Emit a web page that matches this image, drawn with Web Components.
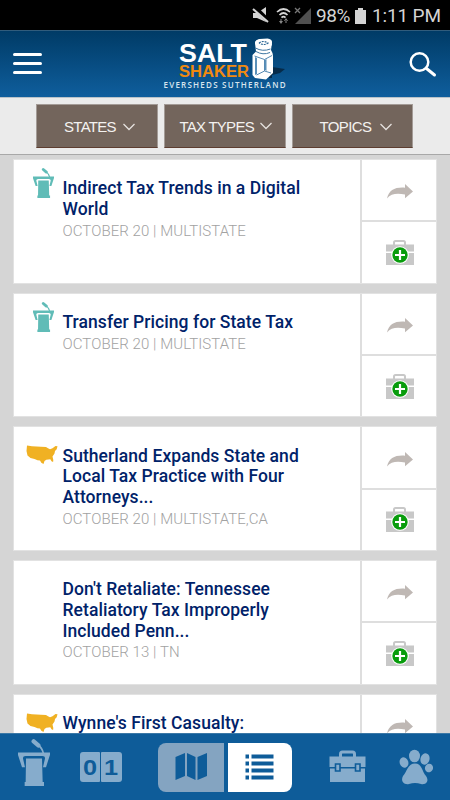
<!DOCTYPE html>
<html lang="en">
<head>
<meta charset="utf-8">
<title>SALT Shaker</title>
<style>
    html, body {
        margin: 0;
        height: 100%;
        overflow: hidden;
        background: #d5d5d5;
        font-family: Roboto, "Liberation Sans", sans-serif;
    }
</style>
</head>
<body>
<salt-app></salt-app>

<script>
const icons = {
    podium: `<svg width="21" height="30" viewBox="0 0 96 140" preserveAspectRatio="none">
        <path fill="none" stroke="currentColor" stroke-width="13" stroke-linecap="round" d="M47 7l14 12"/>
        <path fill="none" stroke="currentColor" stroke-width="5" d="M60 18q12 8 16 24"/>
        <path fill="currentColor" d="M0 40h96v7L84 84h-9l6-26q0-7-8-7H23q-8 0-8 7l6 26h-9L0 48z"/>
        <path fill="currentColor" d="M24 58h48l2 70h4v12H20v-12h3z"/></svg>`,
    usa: `<svg width="32" height="20" viewBox="0 0 32 20">
        <path fill="currentColor" d="M1 .5l5 .8 9 .5 5 .2 2 1.200 2 1 2.500-1 3-2.200 2 .3-.8 3-1.700 1.700-.5 2.500-2 3 .8 3.500-.2 2-1.600-.7-1.200-2-4 .5-1.800 1.200-1 3-2.200-1.200-1.300-2.300-2.500-.3L8.500 14l-4-1-3-2.500L.5 6z"/></svg>`,
    share: `<svg width="26" height="15" viewBox="0 0 26 15">
        <path fill="#bfb8b4" d="M0 14.500C2 6 8 3 18 3.700V0l8 7.500-8 6.700v-3.700C10 9 4 9.500 0 14.500z"/></svg>`,
    addCase: `<svg width="30" height="27" viewBox="0 0 30 27">
        <path fill="none" stroke="#c8c8c8" stroke-width="2" d="M9 6V3.500q0-1.500 1.500-1.500h8q1.500 0 1.500 1.500V6"/>
        <path fill="#c8c8c8" d="M1 5.500h28v7H1zM1 14h28v12H1z"/>
        <circle cx="15" cy="16" r="8.800" fill="#fff"/><circle cx="15" cy="16" r="7.700" fill="#089c0c"/>
        <path stroke="#fff" stroke-width="2.200" d="M10 16h10M15 11v10"/></svg>`
};

class StatusBar extends HTMLElement {
    constructor() {
        super();
        this.attachShadow({mode: 'open'}).innerHTML = `
        <style>
            :host {
                display: flex;
                align-items: center;
                height: 30px;
                box-sizing: border-box;
                padding: 1px 0 0 252px;
                background: #000;
                color: #d4d4d4;
                font-size: 19px;
            }
            svg { flex: none; }
            .percent { margin-left: 0; width: 36px; letter-spacing: -.4px; }
            .battery { margin: 0 0 0 3px; }
            .time { margin-left: 6px; white-space: nowrap; letter-spacing: -.15px; }
        </style>
        <svg width="64" height="22" viewBox="0 0 64 22">
            <path fill="#d4d4d4" d="M1 8h4l9-6v15L5 13H1z"/>
            <path stroke="#000" stroke-width="4.500" d="M2 1.500l14 14"/>
            <path stroke="#d4d4d4" stroke-width="2" d="M1 4l15 13"/>
            <g fill="none" stroke="#d4d4d4" stroke-width="1.700"><path d="M25 7q6.500-6 13 0M27.500 10q4-4 8 0M29.500 12.700q2-2 4 0"/></g>
            <path fill="#888" d="M27 16h4l-2 3zM32 16h4l-2-3zM28.500 14h1v3h-1zM33.500 15h1v3h-1z"/>
            <path fill="#505050" d="M59 3v16H43z"/>
            <path stroke="#777" stroke-width="1.300" d="M43 3l5 5m0-5l-5 5"/>
        </svg>
        <span class="percent">98%</span>
        <svg class="battery" width="11" height="16" viewBox="0 0 11 16"><path fill="#d4d4d4" d="M3 0h5v2h3v14H0V2h3z"/></svg>
        <span class="time">1:11 PM</span>`;
    }
}
customElements.define('status-bar', StatusBar);

class AppHeader extends HTMLElement {
    constructor() {
        super();
        this.attachShadow({mode: 'open'}).innerHTML = `
        <style>
            :host {
                display: flex;
                justify-content: space-between;
                height: 67px;
                box-sizing: border-box;
                padding: 0 13px 0 13px;
                border-top: 1px solid #315c7c;
                background: linear-gradient(#003b66, #0f5e9d);
            }
            .menu { padding-top: 20.500px; }
            .search { padding-top: 19.500px; }
            .logo { width: 130px; margin-left: -2px; }
            svg { display: block; }
            text { font-family: "Liberation Sans", sans-serif; font-weight: bold; }
            .firm { font-family: "Open Sans", sans-serif; font-weight: 600; }
        </style>
        <svg class="menu" width="30" height="25" viewBox="0 0 30 25"><path stroke="#fff" stroke-width="3" stroke-linecap="round" d="M1.500 3h26M1.500 12h26M1.500 21h26"/></svg>
        <svg class="logo" width="130" height="64" viewBox="0 0 130 64">
            <text x="19" y="30.500" font-size="26.500" fill="#fff" textLength="68" lengthAdjust="spacingAndGlyphs">SALT</text>
            <text x="19" y="46" font-size="16" fill="#f08a10" textLength="70" lengthAdjust="spacingAndGlyphs">SHAKER</text>
            <text class="firm" x="3.500" y="57" font-size="8" fill="#d7e4ee" textLength="122">EVERSHEDS SUTHERLAND</text>
            <path fill="#062b49" d="M112 36l13 2-5 4-8 2v3h-3z"/>
            <path fill="#fff" d="M95 12q0-3 4.500-4l8-.5q5 1 4.500 4L111 19l1.500 3 .5 3v17l-7 6.500-11-1.500-2.500-3V24l3.500-3.500z"/>
            <ellipse cx="103.500" cy="12.500" rx="8.500" ry="4.300" fill="#fff" transform="rotate(6 103.500 12.500)"/>
            <path fill="none" stroke="#2b6795" stroke-width="1.200" stroke-dasharray="2 1" d="M99 12q4-3 9 0-4 3-9 0"/>
            <path fill="none" stroke="#3d76a2" stroke-width="1" d="M95.500 17q7 4 15 1M96 20.500q7 4 14 1"/>
            <path fill="none" stroke="#5489b3" stroke-width="1" d="M94.500 25l10 3.500 7.500-4M104.500 28.500V40l-8 4M104.500 40l6.500 2"/>
            <path fill="#5a90b9" d="M95 26l2 1v16l-2 1zM105 29l1.500-1v12l-1.500-1z"/>
        </svg>
        <svg class="search" width="28" height="27" viewBox="0 0 28 27"><circle cx="10.500" cy="11.500" r="8.800" fill="none" stroke="#fff" stroke-width="2.500"/><path stroke="#fff" stroke-width="3" stroke-linecap="round" d="M17.500 18l8 6.500"/></svg>`;
    }
}
customElements.define('app-header', AppHeader);

class FilterButton extends HTMLElement {
    constructor() {
        super();
        this.attachShadow({mode: 'open'}).innerHTML = `
        <style>
            :host {
                display: flex;
                width: 121.800px;
                align-items: center;
                justify-content: center;
                gap: 7px;
                height: 44px;
                box-sizing: border-box;
                padding: 1px 0 0 5px;
                border: 1px solid #a39b96;
                border-bottom-color: #5d3d30;
                background: #73655c;
                color: #f4f2f0;
                font: 15px "Liberation Sans", sans-serif;
                letter-spacing: -.75px;
                white-space: nowrap;
            }
            :host([wide]) { padding: 0 0 0 2px; gap: 6px; }
            :host([last]) { padding-left: 7px; gap: 9px; letter-spacing: -.6px; }
        </style>
        <slot></slot>
        <svg width="12" height="8" viewBox="0 0 12 8"><path fill="none" stroke="#e5e1de" stroke-width="1.300" d="M.5 1L6 6.500 11.500 1"/></svg>`;
    }
}
customElements.define('filter-button', FilterButton);

class FilterBar extends HTMLElement {
    constructor() {
        super();
        this.attachShadow({mode: 'open'}).innerHTML = `
        <style>
            :host {
                display: flex;
                gap: 6px;
                height: 58px;
                box-sizing: border-box;
                padding: 6px 36px 0 36px;
                border-top: 1px solid #b9c3ca;
                border-bottom: 1px solid #a8a8a8;
                background: #ebebeb;
            }
        </style>
        <filter-button>STATES</filter-button>
        <filter-button wide>TAX TYPES</filter-button>
        <filter-button last>TOPICS</filter-button>`;
    }
}
customElements.define('filter-bar', FilterBar);

class NewsCard extends HTMLElement {
    constructor() {
        super();
        this.attachShadow({mode: 'open'});
    }

    connectedCallback() {
        const kind = this.getAttribute('kind');
        this.shadowRoot.innerHTML = `
        <style>
            :host {
                display: flex;
                flex: none;
                height: 124.700px;
                box-sizing: border-box;
                border: 1px solid #e2e2e2;
                background: #fff;
            }
            .icon { width: 48.500px; flex: none; }
            .icon svg { display: block; }
            .podium { color: #60bcb7; padding: 8px 0 0 19px; box-sizing: border-box; }
            .usa { color: #f0b123; padding: 18px 0 0 12px; box-sizing: border-box; }
            .body { flex: 1; padding-top: 18.200px; white-space: pre-line; }
            .title {
                color: #002269;
                font-size: 17.500px;
                font-weight: 500;
                line-height: 20.700px;
                letter-spacing: .06px;
            }
            .date {
                color: #a2a2a2;
                font-size: 15px;
                font-weight: 300;
                line-height: 22px;
                letter-spacing: .07px;
            }
            .actions {
                width: 74px;
                flex: none;
                display: flex;
                flex-direction: column;
                border-left: 2px solid #dedede;
            }
            .actions div { flex: 1; display: flex; align-items: center; justify-content: center; }
            .share { border-bottom: 2px solid #dedede; }
            .share svg { margin: 3px 0 0 2px; }
            .add { padding-left: 2px; }
        </style>
        <div class="icon ${kind}">${icons[kind] || ''}</div>
        <div class="body"><div class="title"><slot></slot></div><div class="date"><slot name="date"></slot></div></div>
        <div class="actions"><div class="share">${icons.share}</div><div class="add">${icons.addCase}</div></div>`;
    }
}
customElements.define('news-card', NewsCard);

class TabBar extends HTMLElement {
    constructor() {
        super();
        this.attachShadow({mode: 'open'}).innerHTML = `
        <style>
            :host {
                display: flex;
                flex: none;
                align-items: center;
                height: 67px;
                box-sizing: border-box;
                border-top: 1px solid #3b78a6;
                background: #0e5c99;
                color: #86accc;
            }
            svg { display: block; flex: none; }
            .podium { margin: -10px 0 0 18px; }
            .podium svg { width: 32px; height: 47px; }
            .digits { display: flex; gap: 1px; margin: 0 0 0 30px; }
            .digits span {
                width: 20.300px;
                height: 30px;
                border-radius: 3px 1px 1px 3px;
                background: #86accc;
                color: #0e5c99;
                font: bold 22px/31px "Liberation Sans", sans-serif;
                text-align: center;
            }
            .digits span:last-child { border-radius: 1px 3px 3px 1px; }
            .digits b { display: inline-block; transform: scaleX(1.15); }
            .switch { display: flex; gap: 4px; margin-left: 36px; }
            .switch div {
                display: flex;
                align-items: center;
                justify-content: center;
                width: 66px;
                height: 49px;
                background: #84a4c1;
                border-radius: 8px 0 0 8px;
            }
            .switch .map { margin: -2px 0 0 1px; }
            .switch .on { width: 64px; background: #fff; border-radius: 0 8px 8px 0; }
            .case { margin: -1px 0 0 37px; }
            .paw { margin: -1px 0 0 33px; }
        </style>
        <div class="podium">${icons.podium}</div>
        <div class="digits"><span><b>0</b></span><span><b>1</b></span></div>
        <div class="switch">
            <div><svg class="map" width="33" height="28" viewBox="0 0 33 28"><path fill="#0e5c99" d="M.5 5L10 1v23L.5 28zM12 1l8.500 4v23L12 24zM22.500 5L32 1v23l-9.500 4z"/></svg></div>
            <div class="on"><svg width="29" height="26" viewBox="0 0 29 26"><path stroke="#0e5c99" stroke-width="4.200" d="M.5 2.500h3.500M6.500 2.500h22M.5 9.500h3.500M6.500 9.500h22M.5 16.500h3.500M6.500 16.500h22M.5 23.500h3.500M6.500 23.500h22"/></svg></div>
        </div>
        <svg class="case" width="37" height="33" viewBox="0 0 37 33">
            <path fill="none" stroke="#86accc" stroke-width="3" d="M11.500 7V4q0-2 2-2h10q2 0 2 2v3"/>
            <path fill="#86accc" d="M.5 6.500h36V17H.5zM1 18.500h35V32H1z"/>
            <path fill="#86accc" stroke="#0e5c99" stroke-width="1.600" d="M6.500 14h4.500v7H6.500zM26.500 14H31v7h-4.500z"/>
        </svg>
        <svg class="paw" width="34" height="36" viewBox="0 0 34 36">
            <g fill="#86accc"><ellipse cx="15.500" cy="7" rx="5.500" ry="6.300"/><ellipse cx="5" cy="13.500" rx="4.300" ry="5.300" transform="rotate(-20 5 13.500)"/><ellipse cx="26" cy="10" rx="4.500" ry="5.800" transform="rotate(15 26 10)"/><ellipse cx="30" cy="19" rx="4" ry="4.300" transform="rotate(25 30 19)"/>
            <path d="M16 14.500c7 0 7 8 11 12.500 4 6-1 9-5 8q-6-2-12 0c-4 1-9-2-6-8 4-4.500 5-12.500 12-12.500z"/></g>
        </svg>`;
    }
}
customElements.define('tab-bar', TabBar);

class SaltApp extends HTMLElement {
    constructor() {
        super();
        this.attachShadow({mode: 'open'}).innerHTML = `
        <style>
            :host { display: flex; flex-direction: column; width: 450px; height: 800px; overflow: hidden; }
            status-bar, app-header, filter-bar { flex: none; }
            main {
                flex: 1;
                min-height: 0;
                overflow: hidden;
                display: flex;
                flex-direction: column;
                gap: 9px;
                padding: 4px 13px 0;
                background: #d5d5d5;
            }
        </style>
        <status-bar></status-bar>
        <app-header></app-header>
        <filter-bar></filter-bar>
        <main>
            <news-card kind="podium">Indirect Tax Trends in a Digital
World<span slot="date">OCTOBER 20 | MULTISTATE</span></news-card>
            <news-card kind="podium">Transfer Pricing for State Tax<span slot="date">OCTOBER 20 | MULTISTATE</span></news-card>
            <news-card kind="usa">Sutherland Expands State and
Local Tax Practice with Four
Attorneys...<span slot="date">OCTOBER 20 | MULTISTATE,CA</span></news-card>
            <news-card kind="none">Don't Retaliate: Tennessee
Retaliatory Tax Improperly
Included Penn...<span slot="date">OCTOBER 13 | TN</span></news-card>
            <news-card kind="usa">Wynne's First Casualty:</news-card>
        </main>
        <tab-bar></tab-bar>`;
    }
}
customElements.define('salt-app', SaltApp);
</script>
</body>
</html>
